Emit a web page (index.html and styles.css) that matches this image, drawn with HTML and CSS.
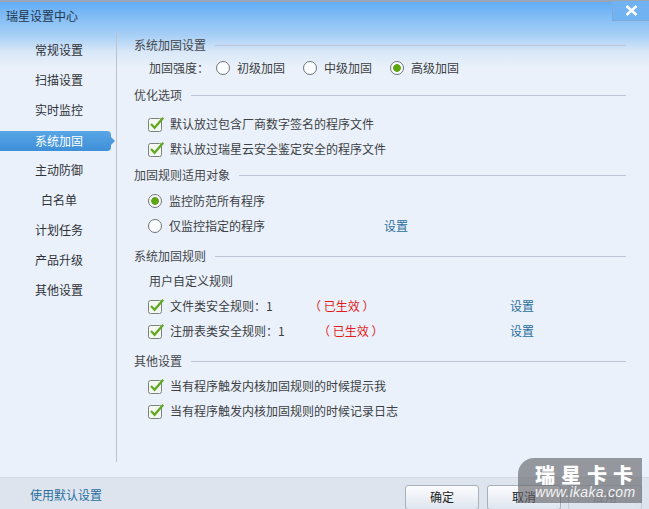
FILE: index.html
```html
<!DOCTYPE html>
<html lang="zh">
<head>
<meta charset="utf-8">
<title>瑞星设置中心</title>
<link rel="stylesheet" href="styles.css">
</head>
<body>
<svg class="defs" width="0" height="0" aria-hidden="true">
  <symbol id="check" viewBox="0 0 17 15">
    <rect x="0.5" y="1.5" width="13" height="13" rx="2" fill="#f4f7f2" stroke="#7a827c"/>
    <path d="M3 7 L6.6 10.8 L15.2 0.8" fill="none" stroke="#62a820" stroke-width="2.3"/>
  </symbol>
</svg>
<div class="window">
  <header class="titlebar">
    <span class="title">瑞星设置中心</span>
    <button class="close" aria-label="关闭">
      <svg width="13" height="11" viewBox="0 0 13 11"><path d="M1.5 1 L11.5 10 M11.5 1 L1.5 10" stroke="#fff" stroke-width="2.6"/></svg>
    </button>
  </header>
  <div class="main">
    <nav class="sidebar">
      <a class="nav-item">常规设置</a>
      <a class="nav-item">扫描设置</a>
      <a class="nav-item">实时监控</a>
      <a class="nav-item active">系统加固</a>
      <a class="nav-item">主动防御</a>
      <a class="nav-item">白名单</a>
      <a class="nav-item">计划任务</a>
      <a class="nav-item">产品升级</a>
      <a class="nav-item">其他设置</a>
    </nav>
    <div class="content">
      <section class="section">
        <div class="heading">系统加固设置</div>
        <div class="row strength">
          <span class="strength-label">加固强度<span class="colon">：</span></span>
          <label class="option"><i class="radio"></i>初级加固</label>
          <label class="option"><i class="radio"></i>中级加固</label>
          <label class="option"><i class="radio on"></i>高级加固</label>
        </div>
      </section>
      <section class="section s2">
        <div class="heading">优化选项</div>
        <label class="row check-row"><svg class="check"><use href="#check"/></svg>默认放过包含厂商数字签名的程序文件</label>
        <label class="row check-row"><svg class="check"><use href="#check"/></svg>默认放过瑞星云安全鉴定安全的程序文件</label>
      </section>
      <section class="section s3">
        <div class="heading">加固规则适用对象</div>
        <label class="row radio-row"><i class="radio on"></i>监控防范所有程序</label>
        <div class="row radio-row"><i class="radio"></i><span class="scope-text">仅监控指定的程序</span><a class="link">设置</a></div>
      </section>
      <section class="section s4">
        <div class="heading">系统加固规则</div>
        <div class="row sub">用户自定义规则</div>
        <div class="row check-row"><svg class="check"><use href="#check"/></svg><span class="rule-name">文件类安全规则<span class="colon">：</span>1</span><span class="status">（ 已生效 ）</span><a class="link">设置</a></div>
        <div class="row check-row"><svg class="check"><use href="#check"/></svg><span class="rule-name wide">注册表类安全规则<span class="colon">：</span>1</span><span class="status short">（ 已生效 ）</span><a class="link">设置</a></div>
      </section>
      <section class="section s5">
        <div class="heading">其他设置</div>
        <label class="row check-row"><svg class="check"><use href="#check"/></svg>当有程序触发内核加固规则的时候提示我</label>
        <label class="row check-row"><svg class="check"><use href="#check"/></svg>当有程序触发内核加固规则的时候记录日志</label>
      </section>
    </div>
  </div>
  <footer class="footer">
    <a class="link">使用默认设置</a>
    <div class="buttons">
      <button class="btn">确定</button>
      <button class="btn">取消</button>
      <button class="btn disabled">应用</button>
    </div>
  </footer>
  <div class="watermark">
    <div class="wm-cn">瑞星卡卡</div>
    <div class="wm-en">www.ikaka.com</div>
  </div>
</div>
</body>
</html>
```
FILE: styles.css
```css
* { box-sizing: border-box; }
html, body { margin: 0; padding: 0; }
body {
  width: 649px;
  height: 509px;
  overflow: hidden;
  font: 12px/22px "Noto Sans CJK SC", "Liberation Sans", sans-serif;
  color: #3c3f44;
}
.defs { position: absolute; }
.window {
  position: relative;
  width: 649px;
  height: 509px;
  display: flex;
  flex-direction: column;
  border-top: 2px solid #9aa6b4;
  background: linear-gradient(#63adf5 0, #a9d0f6 34px, #d9e8f8 50px, #eaf1fa 66px);
}
.titlebar {
  height: 30px;
  flex: none;
  display: flex;
  justify-content: space-between;
  align-items: flex-start;
  padding-left: 6px;
}
.title { line-height: 28px; color: #23384f; }
.close {
  width: 37px;
  height: 20px;
  margin-top: -1px;
  padding: 0;
  display: flex;
  align-items: center;
  justify-content: center;
  border: 1px solid #7fa9d6;
  border-top: 0;
  border-right: 0;
  background: #70b2f2;
}
.main { flex: 1; display: flex; min-height: 0; }
.sidebar {
  width: 117px;
  height: 430px;
  flex: none;
  padding-top: 7px;
  border-right: 1px solid #bcc2c9;
  display: flex;
  flex-direction: column;
  gap: 8px;
}
.nav-item {
  display: block;
  position: relative;
  width: 111px;
  height: 22px;
  padding-left: 7px;
  text-align: center;
  color: #2f3338;
}
.nav-item.active {
  height: 20px;
  margin-top: 2px;
  line-height: 20px;
  color: #fff;
  background: linear-gradient(#58a6e6, #3f8fd8);
  border-radius: 0 4px 4px 0;
}
.nav-item.active::after {
  content: "";
  position: absolute;
  left: 111px;
  top: 6px;
  border-left: 4px solid #4a9ade;
  border-top: 4px solid transparent;
  border-bottom: 4px solid transparent;
}
.content {
  width: 492px;
  margin-left: 17px;
  padding-top: 2px;
  display: flex;
  flex-direction: column;
}
.section { display: flex; flex-direction: column; gap: 3px; }
.s2 { margin-top: 5px; }
.s3 { margin-top: 4px; }
.s4 { margin-top: 8px; }
.s5 { margin-top: 8px; }
.row { height: 22px; display: flex; align-items: center; flex: none; }
.heading {
  height: 22px;
  display: flex;
  align-items: center;
  gap: 9px;
  flex: none;
  color: #44474c;
}
.heading::after {
  content: "";
  flex: 1;
  height: 1px;
  background: #bcc6d6;
}
.colon { font-family: "Noto Sans CJK TC", sans-serif; }
.strength { margin-top: -2px; padding-left: 15px; }
.strength-label { width: 67px; }
.option { display: flex; align-items: center; gap: 7px; margin-right: 18px; }
.radio {
  display: block;
  width: 14px;
  height: 14px;
  flex: none;
  border: 1px solid #6f7679;
  border-radius: 50%;
  background: #fbfcfd;
}
.radio.on { background: radial-gradient(circle, #5da512 0 3.5px, #fbfcfd 4.2px); }
.check { width: 17px; height: 15px; flex: none; display: block; }
.check-row { padding-left: 14px; gap: 5px; }
.s2 .heading { margin-bottom: 4px; }
.s3 .heading { margin-bottom: 1px; }
.radio-row { padding-left: 14px; gap: 7px; }
.scope-text { width: 208px; }
.link { color: #2a6f9e; }
.sub { padding-left: 15px; }
.rule-name { width: 134px; }
.rule-name.wide { width: 143px; }
.status { width: 196px; color: #e21d1d; }
.status.short { width: 187px; }
.footer {
  position: absolute;
  left: 0;
  right: 0;
  top: 475px;
  height: 32px;
  display: flex;
  justify-content: space-between;
  align-items: center;
  padding: 2px 7px 0 30px;
  background: #dde4ee;
  border-top: 1px solid #d3dae5;
}
.buttons { display: flex; gap: 8px; margin-top: 5px; }
.btn {
  width: 74px;
  height: 25px;
  padding: 0;
  font: inherit;
  line-height: 22px;
  color: #222;
  border: 1px solid #a8b0ba;
  border-radius: 3px;
  background: linear-gradient(#fbfcfe, #dfe5ee);
}
.btn:last-child { margin-left: -1px; }
.btn.disabled { color: #a6acb4; background: #dde4ee; border-color: #c4ccd6; }
.watermark {
  position: absolute;
  left: 518px;
  top: 456px;
  width: 124px;
  height: 45px;
  padding: 7px 0 0 17px;
  background: rgba(95, 95, 100, 0.62);
  border-radius: 16px 0 0 0;
  color: #fff;
}
.wm-cn { font-size: 20px; font-weight: 900; line-height: 20px; letter-spacing: 6px; white-space: nowrap; }
.wm-en { font: italic 14px/14px "Liberation Sans", sans-serif; letter-spacing: 0.3px; color: #f2f2f2; white-space: nowrap; }
```
